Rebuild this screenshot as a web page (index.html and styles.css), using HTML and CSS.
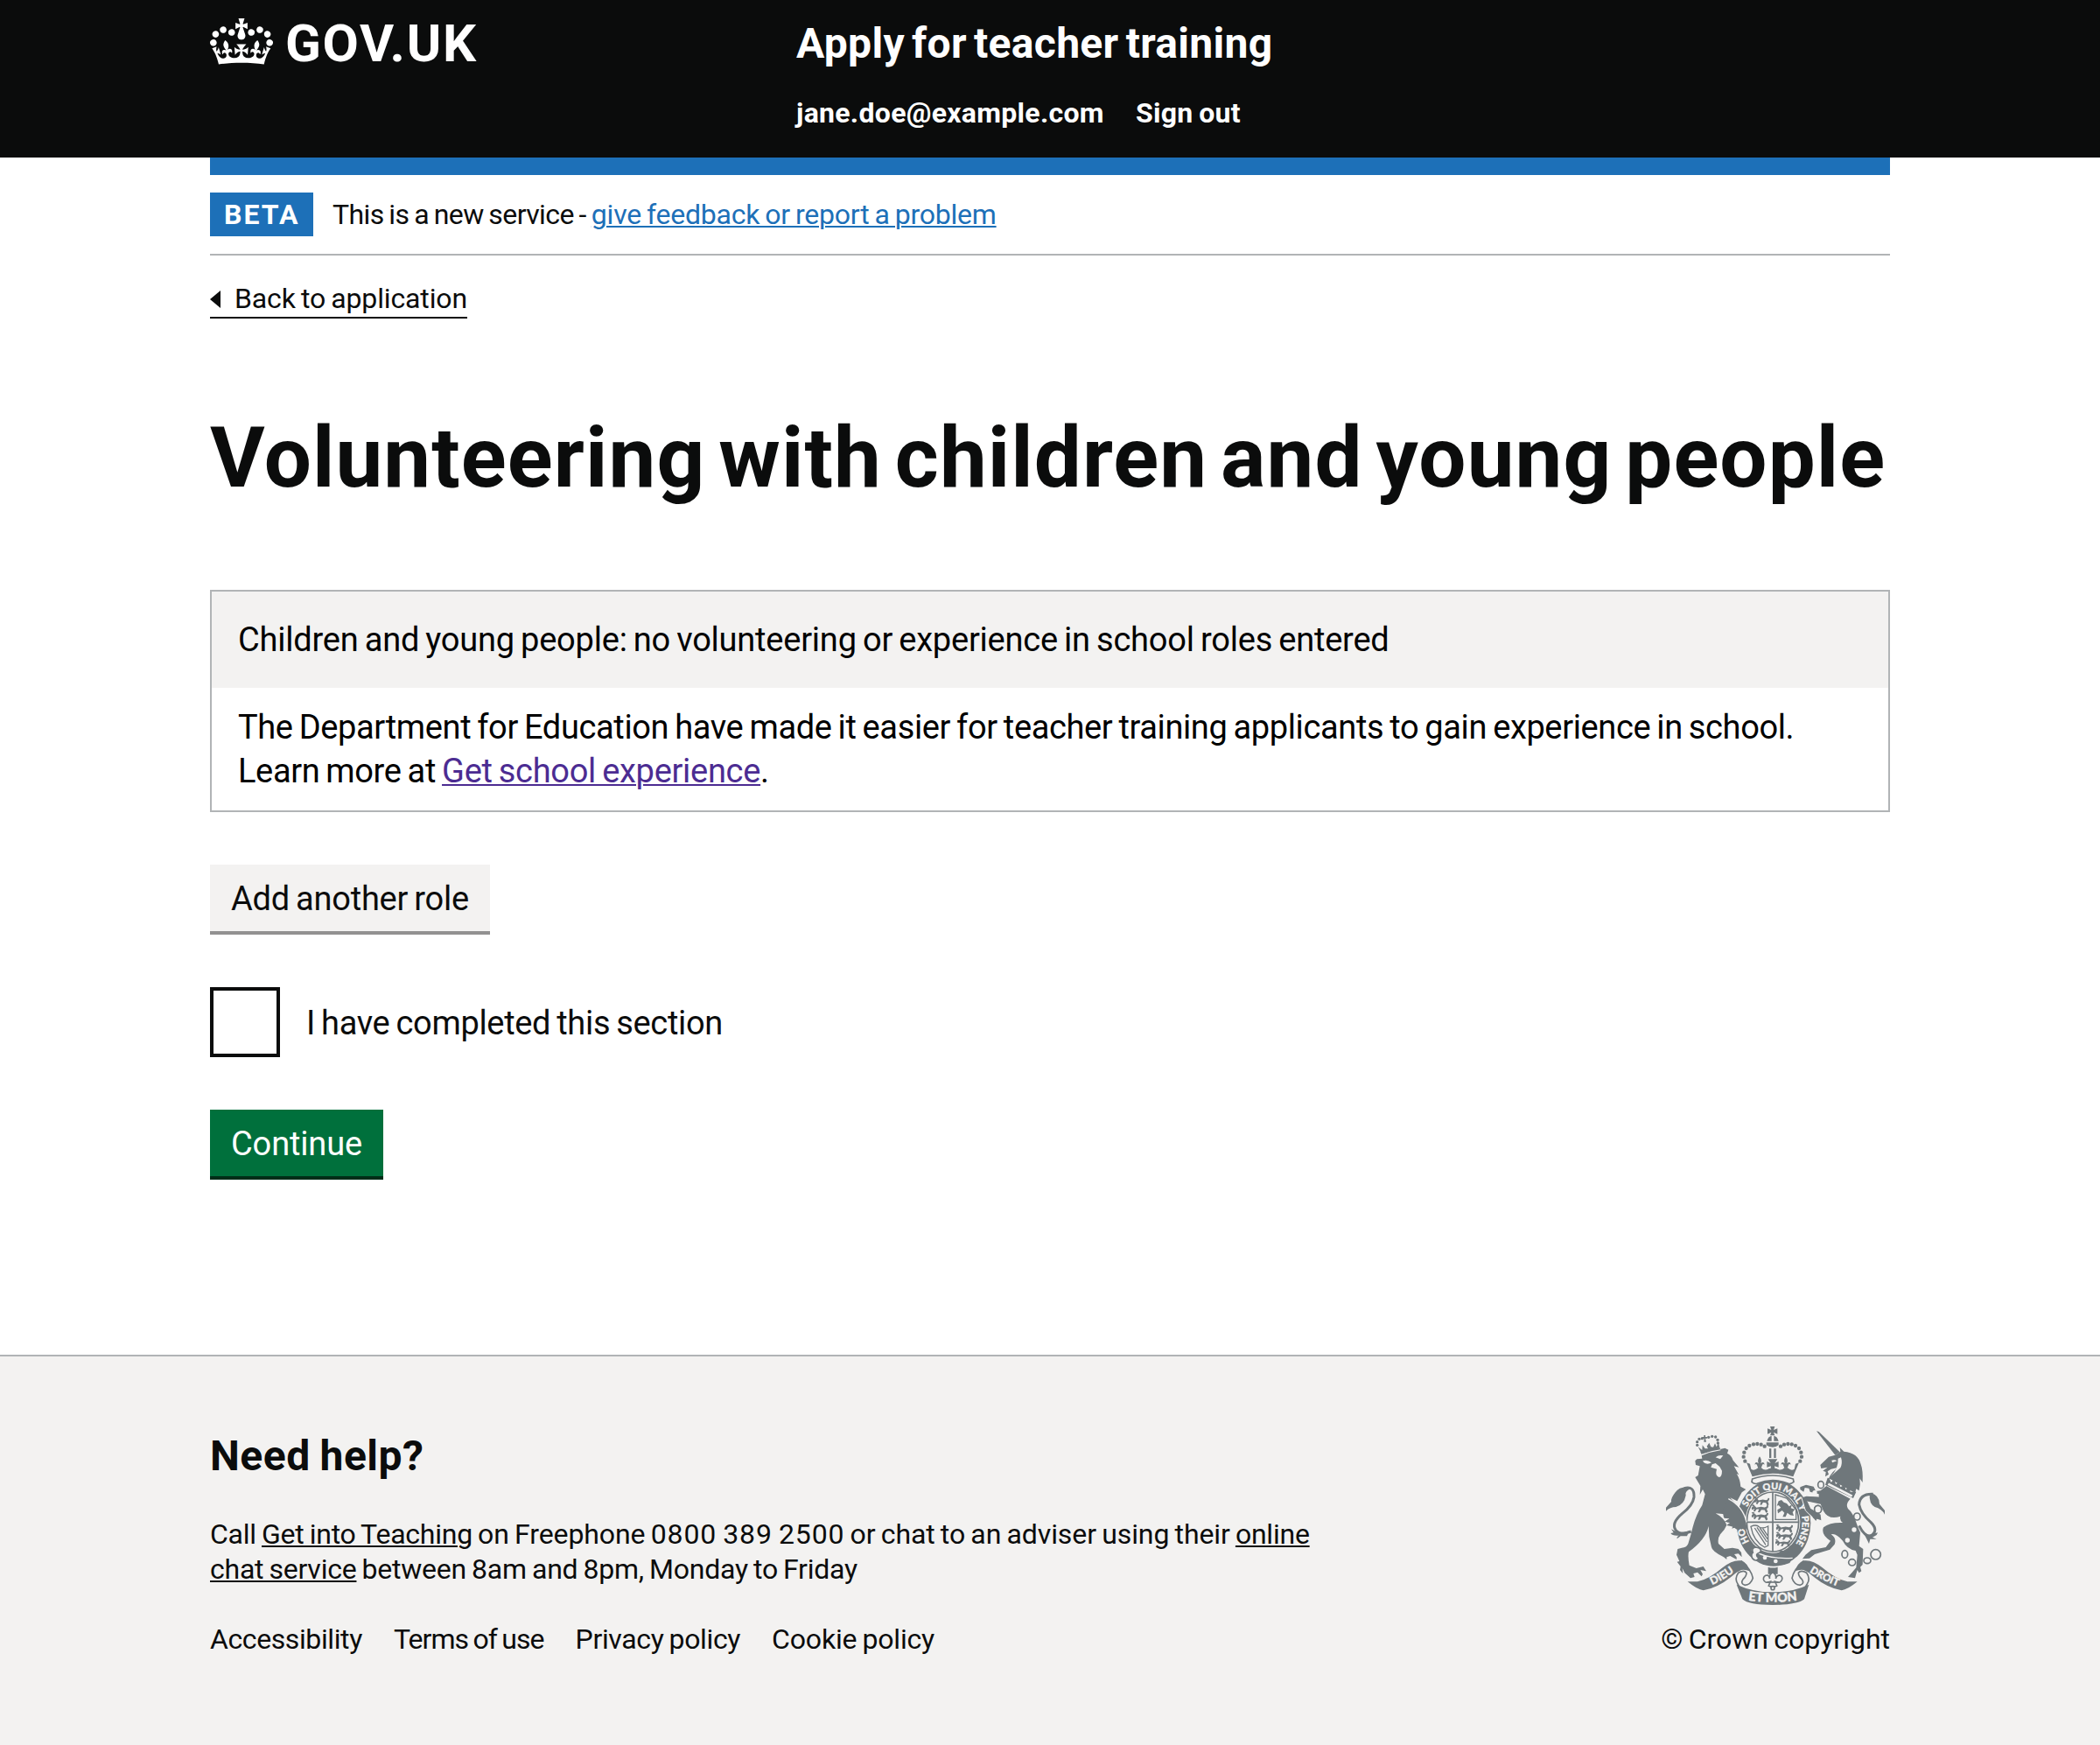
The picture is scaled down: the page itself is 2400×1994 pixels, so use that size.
FILE: index.html
```html
<!DOCTYPE html>
<html lang="en">
<head>
<meta charset="utf-8">
<title>Volunteering with children and young people - Apply for teacher training</title>
<link rel="stylesheet" href="styles.css">
</head>
<body>
<header class="header">
  <div class="container header-row">
    <a class="logo">
      <svg class="crown" viewBox="0 0 132 97" aria-hidden="true"><path fill="currentColor" d="M25 30.2c3.5 1.5 7.7-.2 9.1-3.7 1.5-3.6-.2-7.8-3.9-9.2-3.6-1.4-7.6.3-9.1 3.9-1.4 3.5.3 7.5 3.9 9zM9 39.5c3.6 1.5 7.8-.2 9.2-3.7 1.5-3.6-.2-7.8-3.9-9.1-3.6-1.5-7.6.2-9.1 3.8-1.4 3.5.3 7.5 3.8 9zM4.4 57.2c3.5 1.5 7.7-.2 9.1-3.8 1.5-3.6-.2-7.7-3.9-9.1-3.5-1.5-7.6.3-9.1 3.8-1.4 3.5.3 7.6 3.9 9.1zm38.3-21.4c3.5 1.5 7.7-.2 9.1-3.8 1.5-3.6-.2-7.7-3.9-9.1-3.6-1.5-7.6.3-9.1 3.8-1.3 3.6.4 7.7 3.9 9.1zm64.4-5.6c-3.6 1.5-7.8-.2-9.1-3.7-1.5-3.6.2-7.8 3.8-9.2 3.6-1.4 7.7.3 9.2 3.9 1.3 3.5-.4 7.5-3.9 9zm15.9 9.3c-3.6 1.5-7.7-.2-9.1-3.7-1.5-3.6.2-7.8 3.7-9.1 3.6-1.5 7.7.2 9.2 3.8 1.5 3.5-.3 7.5-3.8 9zm4.7 17.7c-3.6 1.5-7.8-.2-9.2-3.8-1.5-3.6.2-7.7 3.9-9.1 3.6-1.5 7.7.3 9.2 3.8 1.3 3.5-.4 7.6-3.9 9.1zM89.3 35.8c-3.6 1.5-7.8-.2-9.2-3.8-1.4-3.6.2-7.7 3.9-9.1 3.6-1.5 7.7.3 9.2 3.8 1.4 3.6-.3 7.7-3.9 9.1zM69.7 17.7l8.9 4.7V9.3l-8.9 2.8c-.2-.3-.5-.6-.9-.9L72.4 0H59.6l3.5 11.2c-.3.3-.6.5-.9.9l-8.8-2.8v13.1l8.8-4.7c.3.3.6.7.9.9l-5 15.4v.1c-.2.8-.4 1.6-.4 2.4 0 4.1 3.1 7.5 7 8.1h.2c.3 0 .7.1 1 .1.4 0 .7 0 1-.1h.2c4-.6 7.1-4.1 7.1-8.1 0-.8-.1-1.7-.4-2.4V34l-5.1-15.4c.4-.2.7-.6 1-.9zM66 92.8c16.9 0 32.8 1.1 47.1 3.2 4-16.9 8.9-26.7 14-33.5l-9.6-3.4c1 4.9 1.1 7.2 0 10.2-1.5-1.4-3-4.3-4.2-8.7L108.6 76c2.8-2 5-3.2 7.5-3.3-4.4 9.4-10 11.9-13.6 11.2-4.3-.8-6.3-4.6-5.6-7.9 1-4.7 5.7-5.9 8-.5 4.3-8.7-3-11.4-7.6-8.8 7.1-7.2 7.9-13.5 2.1-21.1-8 6.1-8.1 12.3-4.5 20.8-4.7-5.4-12.1-2.5-9.5 6.2 3.4-5.2 7.9-2 7.2 3.1-.6 4.3-6.4 7.8-13.5 7.2-10.3-.9-10.9-8-11.2-13.8 2.5-.5 7.1 1.8 11 7.3L80.2 60c-4.1 4.4-8 5.3-12.3 5.4 1.4-4.4 8-11.6 8-11.6H55.5s6.4 7.2 7.9 11.6c-4.2-.1-8-1-12.3-5.4l1.4 16.4c3.9-5.5 8.5-7.7 10.9-7.3-.3 5.8-.9 12.8-11.1 13.8-7.2.6-12.9-2.9-13.5-7.2-.7-5 3.8-8.3 7.1-3.1 2.7-8.7-4.6-11.6-9.4-6.2 3.7-8.5 3.6-14.7-4.6-20.8-5.8 7.6-5 13.9 2.2 21.1-4.7-2.6-11.9.1-7.7 8.8 2.3-5.5 7.1-4.2 8.1.5.7 3.3-1.3 7.1-5.7 7.9-3.5.7-9-1.8-13.5-11.2 2.5.1 4.7 1.3 7.5 3.3l-4.7-15.4c-1.2 4.4-2.7 7.2-4.3 8.7-1.1-3-.9-5.3 0-10.2l-9.5 3.4c5 6.9 9.9 16.7 14 33.5 14.8-2.1 30.8-3.2 47.7-3.2z"/></svg>
      <span class="logo-text">GOV.UK</span>
    </a>
    <div class="header-content">
      <a class="service-name">Apply for teacher training</a>
      <nav class="header-nav">
        <a>jane.doe@example.com</a>
        <a>Sign out</a>
      </nav>
    </div>
  </div>
</header>
<div class="container">
  <div class="phase-banner">
    <strong class="tag">BETA</strong>
    <span class="phase-text"><span class="phase-intro">This is a new service -</span> <a class="link">give feedback or report a problem</a></span>
  </div>
  <a class="back-link"><svg class="back-arrow" viewBox="0 0 12 20" aria-hidden="true"><path fill="currentColor" d="M0 10 12 0v20z"/></svg><span>Back to application</span></a>
  <main>
    <h1 class="title">Volunteering with children and young people</h1>
    <section class="card">
      <h2 class="card-header">Children and young people: no volunteering or experience in school roles entered</h2>
      <p class="card-body">The Department for Education have made it easier for teacher training applicants to gain experience in school. Learn more at <a class="link link-visited">Get school experience</a>.</p>
    </section>
    <button class="button button-secondary">Add another role</button>
    <label class="checkbox"><span class="checkbox-box"></span><span class="checkbox-label">I have completed this section</span></label>
    <button class="button">Continue</button>
  </main>
</div>
<footer class="footer">
  <div class="container footer-row">
    <div class="footer-main">
      <h2 class="footer-title">Need help?</h2>
      <p class="footer-text">Call <a class="footer-link">Get into Teaching</a> <span class="footer-phone">on Freephone <span class="footer-digits">0800 389 2500</span> or chat to an adviser using their</span> <a class="footer-link">online</a><br><a class="footer-link">chat service</a> between 8am and 8pm, Monday to Friday</p>
      <nav class="footer-nav"><a class="nav-a11y">Accessibility</a><a class="nav-terms">Terms of use</a><a class="nav-privacy">Privacy policy</a><a class="nav-cookie">Cookie policy</a></nav>
    </div>
    <div class="copyright">
      <svg class="arms" viewBox="42 60 750 612" role="img" aria-label="Royal coat of arms">
        <defs>
          <path id="garter" d="M409 504A100 114 0 0 1 409 276A100 114 0 0 1 409 504"/>
          <path id="dieu" d="M182 611Q234 592 292 547"/>
          <path id="droit" d="M517 547Q572 588 652 616"/>
          <path id="etmon" d="M315 655Q408 669 501 655"/>
          <g id="lily"><path d="M0-22Q-9-10-4 2Q-15-8-17 6Q-10 1-8 10L-5 18H5L8 10Q10 1 17 6Q15-8 4 2Q9-10 0-22z"/></g>
          <g id="beast"><path d="M-30 6q-6-8 2-14l7-1 5 6 16-3 12 2q8-1 8-8l5 1q1 9-6 12l4 12-6 4-5-11-11-1-6 10-6-1 4-11-8 0-6 9-5-2 3-10z"/><path d="M-28-8l-5-5 7-2 5 5"/></g>
        </defs>

        <!-- supporters' tails -->
        <g fill="none" stroke="#6f777b" stroke-width="9">
          <path d="M104 272Q140 262 138 302Q134 330 98 358Q58 392 76 416Q92 434 128 420"/>
          <path d="M752 292Q706 290 704 328Q710 360 744 388Q774 418 742 436Q722 436 704 400"/>
        </g>
        <g fill="#6f777b">
          <path d="M112 268Q86 268 74 286Q58 306 60 318L42 338V350Q56 336 76 336Q104 328 110 296Q106 284 124 274z"/>
          <path d="M60 412L76 420L94 426L122 418L114 436L92 436L80 445Q78 438 86 434Q64 436 58 426L68 424z"/>
          <path d="M740 292Q738 326 758 336Q782 342 792 362V348L774 326Q774 296 744 288z"/>
          <path d="M716 420L736 432L768 424L764 432L750 440L764 446L742 446L738 462L728 442z"/>

          <!-- lion -->
          <g>
            <path d="M160 148Q190 136 226 132L229 140Q195 144 164 156z"/>
            <circle cx="149" cy="124" r="5"/><circle cx="149" cy="113" r="5"/><circle cx="156" cy="103" r="5"/><circle cx="166" cy="101" r="5"/><circle cx="188" cy="97" r="5"/><circle cx="200" cy="94" r="5"/><circle cx="212" cy="96" r="5"/><circle cx="219" cy="106" r="5"/><circle cx="220" cy="117" r="5"/>
            <path d="M152 130L162 149L226 133L222 116L215 130L210 118L204 131L196 130L190 116L182 128L186 136L176 136L167 124L166 141z"/>
            <path d="M172 90h5v6h6v5h-6l3 12h-8l1-12h-6v-5h5z"/>
          </g>
          <path d="M142 178L148 172L166 170L164 158Q196 142 228 138L244 134L256 140L252 152Q266 158 272 176L292 200L275 196L292 226L284 222Q296 240 298 266L316 276L302 286L286 316L262 304L288 332Q308 356 314 386L320 414L308 404L304 414L296 402L290 414L280 406L268 410L272 400L252 400L262 390L244 386L260 376L240 374L256 364L236 360L212 358Q242 374 250 398Q244 414 228 430Q218 444 222 462L242 480L270 476L290 480L300 492L302 508L290 496L276 498L284 508V516L262 504L250 508V516L240 508Q200 488 198 474L190 438L188 402Q178 448 120 490Q116 504 122 536L146 546L170 540L180 556L160 552L168 566L164 574L150 560L136 564L140 576L126 580L106 562L98 546L100 564L90 552L92 540L80 524L88 522L78 500L82 480L96 476Q112 476 118 462Q128 430 134 404Q146 360 166 330L176 292L168 276L158 294L160 264L142 234L152 228L158 196L144 192z"/>
          <g fill="#f3f2f1"><path d="M162 156Q195 143 229 139L229 142Q195 147 164 160z"/><path d="M168 178Q184 172 198 184Q184 192 172 184zM212 166Q224 156 238 160L228 172zM200 190L212 186L226 198L234 212Q234 232 224 234Q212 230 214 216L216 206L196 200z"/></g>

          <!-- unicorn -->
          <path d="M558 76L566 78L638 148L622 158z"/>
          <path d="M571 192L600 164L622 158L640 146L638 132L652 146Q700 150 710 190Q718 210 716 252L706 238Q710 260 704 280L694 274L690 290L600 238Q610 214 634 200L608 206L596 214L600 224L588 232L590 216L580 212L596 200L574 204z"/>
          <g fill="#f3f2f1"><path d="M610 176Q620 172 628 178L612 184zM632 170L642 166Q648 186 640 202L606 232Q634 204 632 170z"/></g>
          <path d="M596 236L690 288L684 304L590 256z" fill="#f3f2f1"/>
          <path d="M596 236L602 238L608 252L618 240L624 258L636 250L640 268L654 260L658 276L672 268L674 284L694 284L684 306L588 260z"/>
          <path d="M598 257L680 299" stroke="#f3f2f1" stroke-width="8"/>
          <path d="M592 264L674 308Q656 326 666 342Q684 356 698 400L708 424L704 470L718 480L716 534L708 542L712 556L704 562L698 552L690 580L666 576L682 558L694 544L698 500L692 486Q662 480 648 452Q624 424 608 430Q628 444 620 464L604 482L552 498L534 512L510 514L520 500L540 484L590 474L606 452Q572 430 582 406Q604 388 648 390Q636 380 640 368Q600 382 582 350L572 326L524 316L534 340L552 352L572 362L574 382L560 374L556 384L538 362L522 344L510 308L524 300L566 302L566 292L536 284L532 272L518 270L514 284L502 276L502 268L522 260L548 266L556 282L572 280z"/>
        </g>
        <g fill="#f3f2f1" stroke="#6f777b" stroke-width="5"><ellipse cx="573" cy="260" rx="10" ry="12"/><ellipse cx="563" cy="344" rx="12" ry="13"/><ellipse cx="697" cy="369" rx="11" ry="12"/><ellipse cx="655" cy="498" rx="10" ry="13"/><ellipse cx="680" cy="526" rx="12" ry="11"/><ellipse cx="732" cy="520" rx="12" ry="10"/><circle cx="761" cy="499" r="17"/></g>
        <g fill="#f3f2f1"><circle cx="552" cy="287" r="8"/><circle cx="687" cy="414" r="8"/><circle cx="664" cy="450" r="8"/></g>

        <!-- garter and shield -->
        <ellipse cx="411" cy="391" rx="133" ry="155" fill="#f3f2f1"/>
        <ellipse cx="411" cy="391" rx="127" ry="148" fill="#6f777b"/>
        <g class="motto" font-size="32">
          <text><textPath href="#garter" startOffset="18.5%">HO</textPath></text>
          <text><textPath href="#garter" startOffset="38.5%">SOIT</textPath></text>
          <text><textPath href="#garter" startOffset="49.5%">QUI</textPath></text>
          <text><textPath href="#garter" startOffset="60%">MAL</textPath></text>
          <text><textPath href="#garter" startOffset="67.5%">Y</textPath></text>
          <text><textPath href="#garter" startOffset="79%">PENSE</textPath></text>
        </g>
        <ellipse cx="408" cy="387" rx="94" ry="107" fill="#f3f2f1"/>
        <ellipse cx="408" cy="387" rx="89" ry="102" fill="#f3f2f1" stroke="#6f777b" stroke-width="5"/>
        <path d="M408 285V490M320 388H496" stroke="#6f777b" stroke-width="5"/>
        <g fill="#6f777b">
          <use href="#beast" transform="translate(374 316) scale(.9 .9)"/><use href="#beast" transform="translate(368 341) scale(1 .9)"/><use href="#beast" transform="translate(368 367) scale(1 .9)"/>
          <use href="#beast" transform="translate(452 409) scale(1 .9)"/><use href="#beast" transform="translate(452 435) scale(1 .9)"/><use href="#beast" transform="translate(446 459) scale(.9 .8)"/>
          <path d="M428 316l10-4 8 8 10 4 8 10 10-6-4 12 14 4-8 10 4 12-12-2-10-8-6 14-10 0 6-14-8-8-14 10-2-12 12-8-8-8-6 2z"/>
        </g>
        <g fill="none" stroke="#6f777b" stroke-width="4">
          <path d="M417 379V294L456 306L488 346V379z"/>
          <path d="M333 403Q352 394 362 405Q374 412 392 402V468L380 474Q342 454 333 403z"/>
          <path d="M346 408L384 466M354 406L388 456M364 408L390 446M374 410L390 434"/>
        </g>
        <path d="M336 478Q380 520 476 511L466 528Q420 548 362 522L338 508z" fill="#6f777b"/>
        <path d="M336 482Q384 516 476 511" fill="none" stroke="#f3f2f1" stroke-width="4"/>
        <path d="M424 499L434 486H454L462 496z" fill="#6f777b"/>
        <path d="M350 474Q374 478 364 492Q344 498 360 512Q350 526 338 512Q332 498 340 492Q334 476 350 474z" fill="#f3f2f1" stroke="#6f777b" stroke-width="5"/>
        <circle cx="381" cy="510" r="7" fill="#f3f2f1"/><circle cx="418" cy="522" r="7" fill="#f3f2f1"/>
        <!-- lion's forepaw over the garter -->
        <path d="M256 306L262 310Q304 336 316 386L320 414L306 404L302 414L292 404L286 414L272 404L250 398L262 390L244 386L260 376L240 372L236 350z" fill="#6f777b"/>
        <path d="M256 308Q306 334 318 388" fill="none" stroke="#f3f2f1" stroke-width="4"/>
        <!-- unicorn's forehoof over the garter -->
        <path d="M508 304L524 299L566 302L566 322L526 316L538 342L566 358L572 380L548 374L520 346z" fill="#6f777b"/>
        <path d="M506 302L520 348L546 374" fill="none" stroke="#f3f2f1" stroke-width="3"/>
        <ellipse cx="563" cy="344" rx="12" ry="13" fill="#f3f2f1" stroke="#6f777b" stroke-width="5"/>

        <!-- crown -->
        <path d="M340 236Q310 190 306 160Q314 118 366 116L450 116Q504 122 510 160Q506 190 476 236z" fill="#f3f2f1"/>
        <g fill="#6f777b">
          <path d="M399 60H415L411 72L424 67V86L411 80L415 91H399L403 80L390 86V67L403 72z"/>
          <path d="M388 110Q392 94 404 92V110zM412 92Q424 94 428 110H412z"/>
          <path d="M386 115H428V124Q420 131 408 131Q394 131 386 124z"/>
          <path d="M396 136h7v32h-7zM412 136h7v32h-7z"/>
          <circle cx="380" cy="128" r="6.500"/><circle cx="368" cy="122" r="6.500"/><circle cx="355" cy="120" r="6.500"/><circle cx="342" cy="121" r="6.500"/><circle cx="328" cy="126" r="6.500"/><circle cx="317" cy="135" r="6.500"/><circle cx="310" cy="149" r="6.500"/><circle cx="308" cy="164" r="6.500"/><circle cx="313" cy="179" r="6.500"/>
          <circle cx="435" cy="128" r="6.500"/><circle cx="447" cy="122" r="6.500"/><circle cx="460" cy="120" r="6.500"/><circle cx="473" cy="121" r="6.500"/><circle cx="486" cy="126" r="6.500"/><circle cx="498" cy="135" r="6.500"/><circle cx="505" cy="149" r="6.500"/><circle cx="507" cy="164" r="6.500"/><circle cx="502" cy="179" r="6.500"/>
          <path d="M392 172H424L415 186L428 180V200L414 196L416 208H400L402 196L388 200V180L401 186z"/>
          <use href="#lily" transform="translate(363 185)"/><use href="#lily" transform="translate(453 185)"/>
          <path d="M318 184L330 188L334 206Q344 214 358 202H369Q380 214 396 204H420Q436 214 448 202H459Q472 214 482 206L486 188L498 184L478 232Q408 210 338 232z"/>
        </g>
        <path d="M338 240Q408 216 478 240L480 250Q470 258 462 256Q408 234 354 256Q344 258 336 250z" fill="#f3f2f1" stroke="#6f777b" stroke-width="5"/>

        <!-- fleur-de-lis badge -->
        <path d="M392 542Q408 547 425 542V566H392z" fill="#6f777b"/>
        <g fill="#f3f2f1" stroke="#6f777b" stroke-width="5"><path d="M400 592Q380 600 376 584Q376 570 390 570Q396 572 398 582Q394 570 408 558Q422 570 418 582Q420 572 430 570Q442 572 440 584Q436 600 416 592L422 606L408 612L394 606z"/><path d="M388 594H428"/><circle cx="408" cy="614" r="6"/></g>

        <!-- motto scroll -->
        <g id="scroll">
          <path d="M116 592L150 592Q190 584 236 544Q270 516 300 520Q322 528 328 556Q316 550 300 552Q280 560 262 578Q220 612 170 622Q150 620 116 592z" fill="#6f777b"/>
          <path d="M300 521Q334 550 340 580Q332 604 312 604Q296 598 306 584Q318 574 318 562Q310 550 290 562Q276 582 288 600Q298 616 304 628" fill="none" stroke="#6f777b" stroke-width="5"/>
        </g>
        <use href="#scroll" transform="matrix(-1 0 0 1 814 0)"/>
        <path d="M284 602Q340 628 408 628Q476 628 532 602L516 652Q492 672 408 672Q324 672 304 652z" fill="#6f777b"/>
        <g class="motto" font-size="37">
          <text><textPath href="#dieu" startOffset="50%">DIEU</textPath></text>
          <text font-size="35"><textPath href="#droit" startOffset="49%">DROIT</textPath></text>
          <text font-size="43"><textPath href="#etmon" startOffset="50%">ET MON</textPath></text>
        </g>
      </svg>
      <span>© Crown copyright</span>
    </div>
  </div>
</footer>
</body>
</html>
```
FILE: styles.css
```css
* { box-sizing: border-box; }

body {
  margin: 0;
  min-height: 1994px;
  display: flex;
  flex-direction: column;
  background: #fff;
  color: #0b0c0c;
  font-family: Roboto, "Liberation Sans", Arial, sans-serif;
  font-size: 32px;
  line-height: 40px;
  word-spacing: -0.05em;
}

.container { width: 1920px; margin: 0 auto; }

/* Header */
.header { height: 180px; background: #0b0c0c; color: #fff; }
.header-row { display: flex; height: 200px; border-bottom: 20px solid #1d70b8; font-weight: 700; letter-spacing: 0.3px; }
.logo { display: flex; width: 670px; padding-top: 21px; gap: 14px; }
.crown { width: 72px; height: 53px; }
.logo-text { font-size: 60px; line-height: 58px; letter-spacing: 1.7px; }
.service-name { display: block; font-size: 48px; line-height: 60px; padding-top: 20px; letter-spacing: 0.3px; word-spacing: -4px; }
.header-nav { display: flex; gap: 36px; padding-top: 29px; }

/* Phase banner */
.phase-banner { margin-top: 20px; height: 92px; padding-top: 20px; border-bottom: 2px solid #b1b4b6; display: flex; gap: 22px; line-height: 50px; }
.tag { width: 118px; height: 50px; padding-left: 16px; background: #1d70b8; color: #fff; letter-spacing: 2px; }
.phase-text { letter-spacing: -0.24px; white-space: nowrap; }
.phase-intro { letter-spacing: -0.6px; }

.link, .footer-link { text-decoration: underline; text-decoration-thickness: 2px; text-underline-offset: 2px; }
.link { color: #1d70b8; }
.link-visited { color: #4c2c92; letter-spacing: -0.29px; }

.back-link { display: flex; width: 294px; height: 44px; margin-top: 28px; padding-top: 1px; border-bottom: 2px solid; gap: 16px; letter-spacing: -0.14px; white-space: nowrap; }
.back-arrow { width: 12px; height: 20px; margin-top: 11px; }

/* Main content */
.title { margin: 109px 0 101px; font-size: 96px; line-height: 100px; font-weight: 700; letter-spacing: 1.1px; word-spacing: -10px; white-space: nowrap; }
.card { border: 2px solid #b1b4b6; font-size: 38px; line-height: 50px; color: #000; word-spacing: -2px; }
.card-header { margin: 0; padding: 30px; background: #f3f2f1; font-size: 38px; font-weight: 400; letter-spacing: -0.22px; }
.card-body { margin: 0; padding: 20px 30px; letter-spacing: -0.37px; }

.button {
  display: block;
  height: 76px;
  margin: 60px 0 0;
  padding: 2px 24px 0;
  border: 0;
  background: #00703c;
  box-shadow: 0 4px 0 #002d18;
  color: #fff;
  font-family: inherit;
  font-size: 38px;
  line-height: 38px;
  letter-spacing: -0.14px;
}
.button-secondary { background: #f3f2f1; box-shadow: 0 4px 0 #929191; color: #0b0c0c; letter-spacing: -0.24px; word-spacing: -2px; }

.checkbox { display: flex; align-items: center; gap: 30px; margin-top: 64px; font-size: 38px; letter-spacing: -0.33px; word-spacing: -2px; }
.button + .checkbox + .button { margin-top: 60px; }
.checkbox-box { width: 80px; height: 80px; border: 4px solid #0b0c0c; }
.checkbox-label { padding-top: 2px; }

/* Footer */
.footer { flex: 1; margin-top: 204px; padding-top: 80px; background: #f3f2f1; border-top: 2px solid #b1b4b6; }
.footer-row { display: flex; justify-content: space-between; }
.footer-main { padding-top: 4px; }
.footer-title { margin: 0 0 39px; font-size: 48px; line-height: 60px; letter-spacing: 0.5px; }
.footer-text { margin: 0 0 40px; letter-spacing: -0.23px; }
.footer-phone { letter-spacing: -0.09px; }
.footer-digits { letter-spacing: 0.85px; }
.footer-nav { display: flex; gap: 36px; }
.nav-a11y { letter-spacing: -0.4px; }
.nav-terms { letter-spacing: -0.95px; }
.nav-privacy { letter-spacing: -0.35px; }
.nav-cookie { letter-spacing: -0.18px; }
.copyright { display: flex; flex-direction: column; align-items: flex-end; gap: 19px; }
.arms { width: 250px; height: 204px; margin-right: 6px; }
.motto { fill: #f3f2f1; stroke: #f3f2f1; stroke-width: 1px; font-family: Lato, sans-serif; font-weight: 900; text-anchor: middle; word-spacing: 0; }
```
